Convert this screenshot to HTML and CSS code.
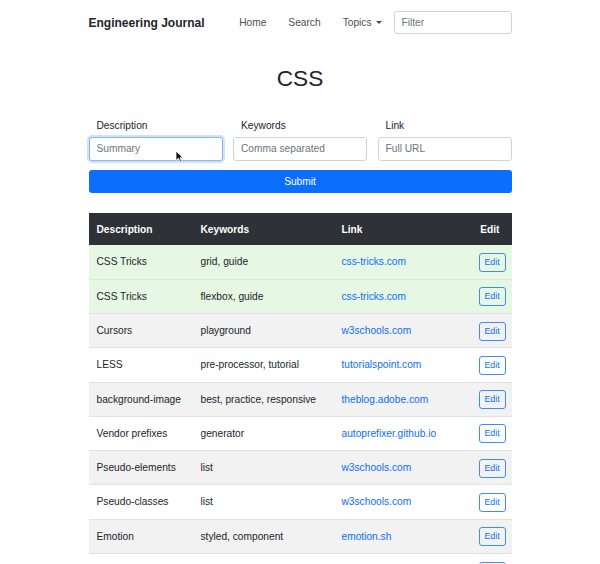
FILE: index.html
```html
<!DOCTYPE html>
<html lang="en">
<head>
<meta charset="utf-8">
<title>Engineering Journal</title>
<link rel="stylesheet" href="styles.css">
</head>
<body>
<nav class="navbar">
  <div class="container nav-inner">
    <a class="brand" href="#">Engineering Journal</a>
    <ul class="nav-links">
      <li><a href="#">Home</a></li>
      <li><a href="#">Search</a></li>
      <li><a href="#" class="dropdown">Topics <span class="caret"></span></a></li>
    </ul>
    <input class="filter" type="text" placeholder="Filter">
  </div>
</nav>
<main class="container">
  <h1 class="title">CSS</h1>
  <form class="entry-form">
    <div class="fields">
      <label class="field">
        <span class="label">Description</span>
        <input class="input focused" type="text" placeholder="Summary">
      </label>
      <label class="field">
        <span class="label">Keywords</span>
        <input class="input" type="text" placeholder="Comma separated">
      </label>
      <label class="field">
        <span class="label">Link</span>
        <input class="input" type="text" placeholder="Full URL">
      </label>
    </div>
    <button class="submit" type="button">Submit</button>
    <svg class="cursor" width="9" height="13" viewBox="0 0 9 13"><path d="M1 1 L1 10.5 L3.4 8.3 L5 12 L6.5 11.3 L5 7.8 L8 7.8 Z" fill="#111" stroke="#fff" stroke-width="0.8"/></svg>
  </form>
  <table class="entries">
    <colgroup><col class="c1"><col class="c2"><col class="c3"><col class="c4"></colgroup>
    <thead>
      <tr><th>Description</th><th>Keywords</th><th>Link</th><th class="edit-col">Edit</th></tr>
    </thead>
    <tbody>
      <tr class="new"><td>CSS Tricks</td><td>grid, guide</td><td><a href="#">css-tricks.com</a></td><td class="edit-col"><button class="edit">Edit</button></td></tr>
      <tr class="new"><td>CSS Tricks</td><td>flexbox, guide</td><td><a href="#">css-tricks.com</a></td><td class="edit-col"><button class="edit">Edit</button></td></tr>
      <tr><td>Cursors</td><td>playground</td><td><a href="#">w3schools.com</a></td><td class="edit-col"><button class="edit">Edit</button></td></tr>
      <tr><td>LESS</td><td>pre-processor, tutorial</td><td><a href="#">tutorialspoint.com</a></td><td class="edit-col"><button class="edit">Edit</button></td></tr>
      <tr><td>background-image</td><td>best, practice, responsive</td><td><a href="#">theblog.adobe.com</a></td><td class="edit-col"><button class="edit">Edit</button></td></tr>
      <tr><td>Vendor prefixes</td><td>generator</td><td><a href="#">autoprefixer.github.io</a></td><td class="edit-col"><button class="edit">Edit</button></td></tr>
      <tr><td>Pseudo-elements</td><td>list</td><td><a href="#">w3schools.com</a></td><td class="edit-col"><button class="edit">Edit</button></td></tr>
      <tr><td>Pseudo-classes</td><td>list</td><td><a href="#">w3schools.com</a></td><td class="edit-col"><button class="edit">Edit</button></td></tr>
      <tr><td>Emotion</td><td>styled, component</td><td><a href="#">emotion.sh</a></td><td class="edit-col"><button class="edit">Edit</button></td></tr>
      <tr class="partial"><td></td><td></td><td></td><td class="edit-col"><button class="edit">Edit</button></td></tr>
    </tbody>
  </table>
</main>
</body>
</html>
```
FILE: styles.css
```css
* { box-sizing: border-box; }
html, body { margin: 0; padding: 0; }
body {
  font-family: "Liberation Sans", Arial, sans-serif;
  font-size: 10.2px;
  line-height: 1.5;
  color: #212529;
  background: #fff;
  overflow: hidden;
  height: 564px;
}
.container {
  width: 423px;
  margin: 0 auto;
}
.navbar { height: 44px; }
.nav-inner {
  display: flex;
  align-items: center;
  height: 44px;
  padding-top: 1px;
}
.brand {
  font-size: 12px;
  font-weight: 700;
  color: #212529;
  text-decoration: none;
}
.nav-links {
  display: flex;
  gap: 22px;
  list-style: none;
  margin: 0 0 0 auto;
  padding: 0;
}
.nav-links a {
  color: #4a4f55;
  text-decoration: none;
  display: flex;
  align-items: center;
}
.caret {
  display: inline-block;
  margin-left: 4px;
  border-top: 3.5px solid #4a4f55;
  border-left: 3.5px solid transparent;
  border-right: 3.5px solid transparent;
}
.filter {
  margin-left: 12px;
  margin-top: -1px;
  width: 118px;
  height: 23px;
  border: 1px solid #ced4da;
  border-radius: 3px;
  padding: 0 7px;
  font: inherit;
  color: #495057;
}
.filter::placeholder, .input::placeholder { color: #6c757d; }
.title {
  margin: 17px 0 0;
  text-align: center;
  font-size: 22.7px;
  font-weight: 400;
  line-height: 34px;
}
.entry-form {
  position: relative;
  margin-top: 23px;
}
.fields {
  display: flex;
  gap: 10.5px;
}
.field {
  flex: 1 1 0;
  min-width: 0;
  display: flex;
  flex-direction: column;
}
.label {
  padding-left: 8px;
  line-height: 16.5px;
  margin-bottom: 2px;
}
.input {
  width: 100%;
  min-width: 0;
  height: 24px;
  border: 1px solid #ced4da;
  border-radius: 3px;
  padding: 0 7px;
  font: inherit;
  color: #495057;
}
.input.focused {
  border-color: #86b7fe;
  box-shadow: 0 0 0 2px rgba(13, 110, 253, 0.2);
  outline: none;
}
.submit {
  display: block;
  width: 100%;
  margin-top: 9.5px;
  height: 23px;
  padding-top: 1px;
  border: none;
  border-radius: 3px;
  background: #0b6efd;
  color: #fff;
  font: inherit;
}
.cursor {
  position: absolute;
  left: 86px;
  top: 32px;
}
.entries {
  width: 100%;
  margin-top: 20px;
  border-collapse: collapse;
  table-layout: fixed;
}
.c1 { width: 104px; }
.c2 { width: 141px; }
.c3 { width: 137px; }
.c4 { width: 41px; }
.entries th {
  background: #2e3236;
  color: #fff;
  font-weight: 700;
  text-align: left;
  padding: 8.5px 8px 7.5px;
  line-height: 16px;
}
.entries th.edit-col { text-align: right; padding-right: 12px; }
.entries tbody tr { height: 34.25px; }
.entries td {
  padding: 1px 8px 0;
  border-top: 1px solid #dee2e6;
  line-height: 16px;
  white-space: nowrap;
  vertical-align: middle;
}
.entries tbody tr:first-child td { border-top: none; }
.entries td.edit-col { text-align: right; padding-right: 8px; }
.entries tbody tr:nth-child(odd) { background: #f2f2f2; }
.entries tbody tr.new { background: #e6f7e3; }
.entries tbody tr.partial { background: #fff; }
.entries a {
  color: #0b6efd;
  text-decoration: none;
}
.edit {
  display: inline-block;
  height: 19px;
  padding: 0 5px;
  border: 1px solid #3d8bfd;
  border-radius: 3px;
  background: transparent;
  color: #0b6efd;
  font-family: inherit;
  font-size: 8.8px;
  line-height: 17px;
  vertical-align: middle;
}
```
